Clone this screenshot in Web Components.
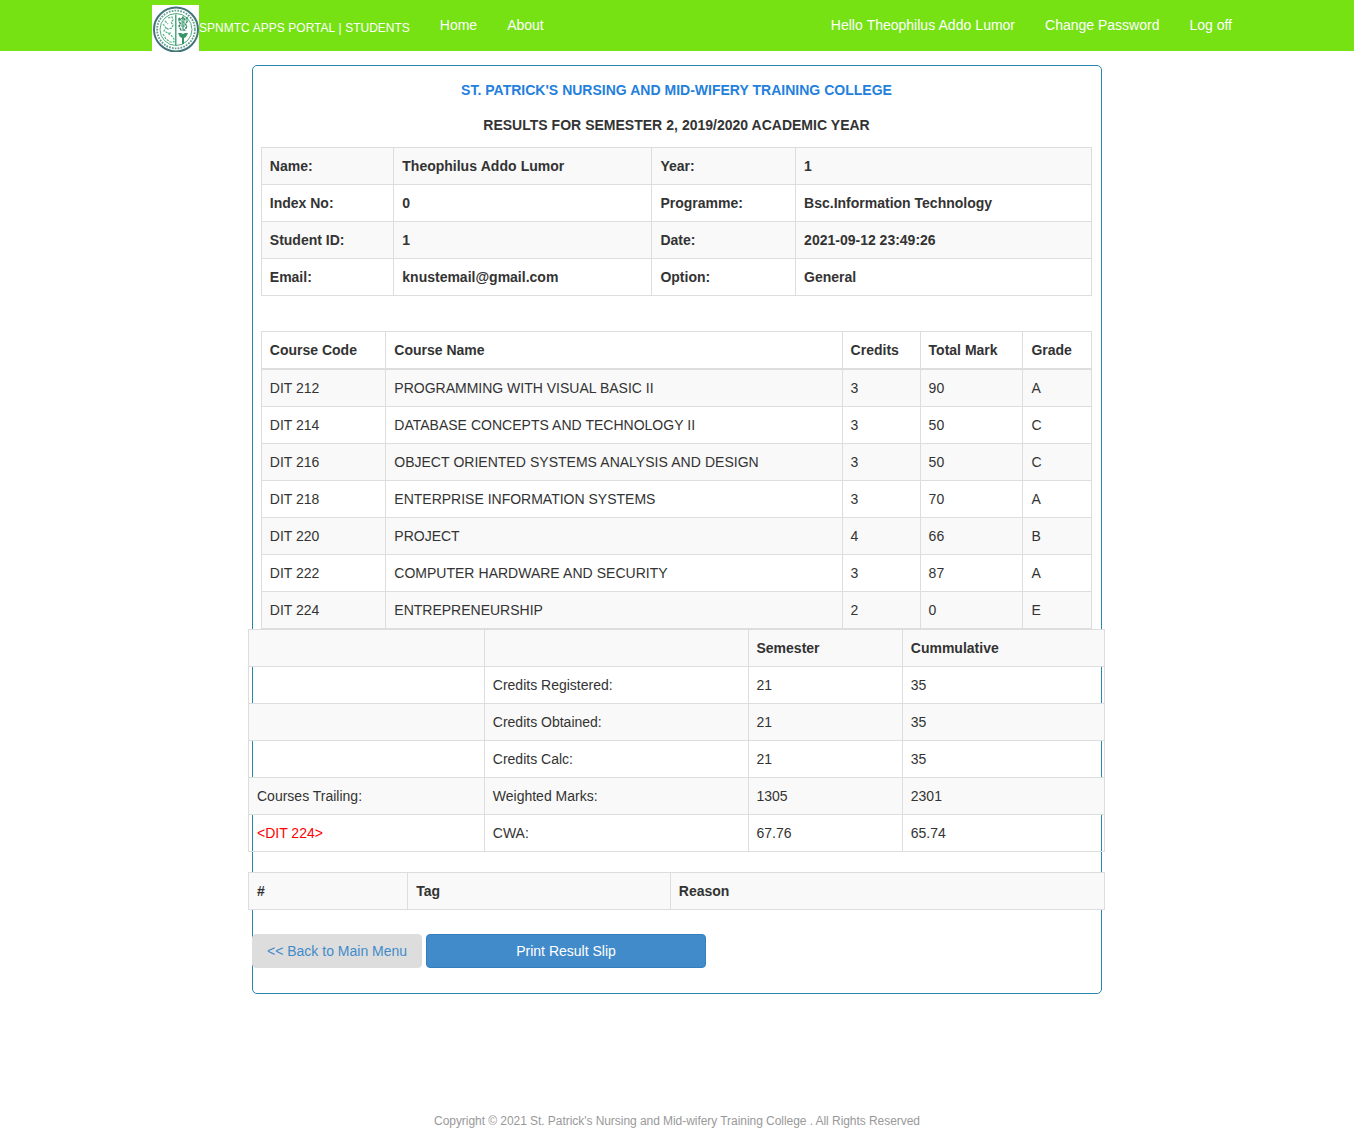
<!DOCTYPE html>
<html lang="en">
<head>
<meta charset="utf-8">
<title>SPNMTC Apps Portal</title>
<style>
body{margin:0;background:#fff;font:14px/20px "Liberation Sans",Arial,sans-serif;color:#333}
</style>
</head>
<body>
<portal-page></portal-page>
<script>
const define = (name, html, setup) => customElements.define(name, class extends HTMLElement {
  constructor() {
    super();
    const root = this.attachShadow({mode: 'open'});
    const t = document.createElement('template');
    t.innerHTML = html;
    root.append(t.content.cloneNode(true));
  }
  connectedCallback() { if (setup) setup(this, this.shadowRoot); }
});

// Evens out the tight kerning between a space and a capital A.
const spacing = s => {
  const gaps = (s.match(/ /g) || []).length;
  return gaps ? ((s.match(/ A/g) || []).length * 0.055 / gaps).toFixed(4) + 'em' : '0';
};

define('college-crest', `
<style>:host{display:block;width:47px;height:47px;flex:none}svg{display:block}</style>
<svg width="47" height="47" viewBox="0 0 47 47" fill="none">
  <rect width="47" height="47" fill="#fff"/>
  <circle cx="24" cy="24.5" r="22" stroke="#43747a" stroke-width="2"/>
  <circle cx="24" cy="24.5" r="18.9" stroke="#5f9c8c" stroke-width="1.8" stroke-dasharray="1.7 1.2"/>
  <circle cx="24" cy="24.5" r="16" stroke="#4fae80" stroke-width="1"/>
  <path d="M23.8 9.5V40" stroke="#2f9a66" stroke-width="1.3"/>
  <path d="M16 13l4-1 1 3-2 2 2 3-1 3-4 1-3-2M11 19l3 4-2 3 4 2 4 0M11 29l3 5 4 3 4 0 0-3-3-4-4-2M13 16l3 3" stroke="#55b485" stroke-width="1.2" stroke-dasharray="2.4 1"/>
  <path d="M27 13l2 2 2-3 2 3 2-2v4l-2 2 2 2-2 4h-4l-2-4 2-2-2-2z" stroke="#2f8d62" stroke-width="1.4" stroke-dasharray="3 .8"/>
  <path d="M31 12v12M29 17h4M29 21h4" stroke="#3e9a71" stroke-width="1.2"/>
  <path d="M26 28h3l2 1 2-1h3l-2 4-2 1v6h-2v-6l-2-1z" fill="#369466"/>
</svg>`);

define('nav-link', `
<style>:host{display:block;padding:15px;color:#fff;white-space:nowrap}</style><slot></slot>`,
(host) => { host.style.wordSpacing = spacing(host.textContent); });

define('nav-bar', `
<style>
:host{display:block;height:51px;background:#76e214}
.in{display:flex;justify-content:space-between;width:1110px;margin-left:137px;height:51px}
.l,.r{display:flex}
.brand{display:flex;align-items:flex-start;padding:5px 15px;color:#fff;font-size:12px}
.brand span{padding-top:13px;white-space:nowrap;word-spacing:.3px}
</style>
<div class="in"><div class="l"><div class="brand"><college-crest></college-crest><span>SPNMTC APPS PORTAL | STUDENTS</span></div>
<nav-link>Home</nav-link><nav-link>About</nav-link></div>
<div class="r"><nav-link>Hello Theophilus Addo Lumor</nav-link><nav-link>Change Password</nav-link><nav-link>Log off</nav-link></div></div>`);

const TABLES = {
  student: {cols: [132,258,144,297], nudge: [-.2,.3,.4,.1], bold: 'all', rows: [
    ['Name:','Theophilus Addo Lumor','Year:','1'],
    ['Index No:','0','Programme:','Bsc.Information Technology'],
    ['Student ID:','1','Date:','2021-09-12 23:49:26'],
    ['Email:','knustemail@gmail.com','Option:','General']]},
  courses: {cols: [124,457,78,102,70], nudge: [-.2,.3,-.4,-.4,.4], head: ['Course Code','Course Name','Credits','Total Mark','Grade'], rows: [
    ['DIT 212','PROGRAMMING WITH VISUAL BASIC II','3','90','A'],
    ['DIT 214','DATABASE CONCEPTS AND TECHNOLOGY II','3','50','C'],
    ['DIT 216','OBJECT ORIENTED SYSTEMS ANALYSIS AND DESIGN','3','50','C'],
    ['DIT 218','ENTERPRISE INFORMATION SYSTEMS','3','70','A'],
    ['DIT 220','PROJECT','4','66','B'],
    ['DIT 222','COMPUTER HARDWARE AND SECURITY','3','87','A'],
    ['DIT 224','ENTREPRENEURSHIP','2','0','E']]},
  summary: {cols: [236,264,154,203], nudge: [0,-.2,-.5,-.2], bold: 'first', rows: [
    ['','','Semester','Cummulative'],
    ['','Credits Registered:','21','35'],
    ['','Credits Obtained:','21','35'],
    ['','Credits Calc:','21','35'],
    ['Courses Trailing:','Weighted Marks:','1305','2301'],
    ['<DIT 224>','CWA:','67.76','65.74']]},
  tags: {cols: [159,263,435], nudge: [0,.2,-.2], bold: 'all', rows: [['#','Tag','Reason']]}
};

define('data-grid', `
<style>
:host{display:block;flex:none}
.t{width:max-content;border-bottom:1px solid #ddd;border-right:1px solid #ddd}
.row{display:grid;border-top:1px solid #ddd}
.cell{box-sizing:border-box;height:36px;padding:8px;border-left:1px solid #ddd;white-space:nowrap}
.odd{background:#f9f9f9}
.b{font-weight:700}
.head + .row{border-top-width:2px}
.red{color:#f00}
</style><div class="t" role="table"></div>`, (host, root) => {
  const d = TABLES[host.getAttribute('kind')], t = root.querySelector('.t');
  const tracks = d.cols.map((w, i) => (i === d.cols.length - 1 ? w - 1 : w) + 'px').join(' ');
  const add = (cells, cls) => {
    const r = document.createElement('div');
    r.className = 'row ' + cls; r.style.gridTemplateColumns = tracks; r.setAttribute('role', 'row');
    cells.forEach((c, i) => {
      const e = document.createElement('div');
      e.className = 'cell' + (c[0] === '<' ? ' red' : ''); e.textContent = c; e.setAttribute('role', 'cell');
      e.style.paddingLeft = 8 + d.nudge[i] + 'px';
      e.style.wordSpacing = spacing(c);
      r.append(e);
    });
    t.append(r);
  };
  if (d.head) add(d.head, 'head b');
  d.rows.forEach((r, i) => add(r, (i % 2 ? '' : 'odd') + (d.bold === 'all' || (d.bold === 'first' && !i) ? ' b' : '')));
});

define('action-button', `
<style>
:host{display:block;box-sizing:border-box;height:34px;padding:6px 14px;border:1px solid #ddd;border-radius:4px;background:#ddd;color:#428bca;text-align:center;white-space:nowrap;width:170px}
:host([primary]){width:280px;background:#428bca;border-color:#357ebd;color:#fff}
</style><slot></slot>`);

define('result-card', `
<style>
:host{display:block;box-sizing:border-box;width:850px;height:929px;margin:14px 0 0 252px;border:1px solid #2a86ad;border-radius:5px;padding:14px 8px 0}
h4{margin:0 0 15px;font-size:14px;line-height:20px;text-align:center;width:831px;word-spacing:.13px}
h4.c{color:#2480dc}
h4.s{margin-bottom:12px}
.courses{margin-top:35px}
.wide{margin-left:-13px}
.tags{margin-top:20px}
.btns{display:flex;gap:4px;margin:24px 0 0 -9px}
</style>
<h4 class="c">ST. PATRICK'S NURSING AND MID-WIFERY TRAINING COLLEGE</h4>
<h4 class="s">RESULTS FOR SEMESTER 2, 2019/2020 ACADEMIC YEAR</h4>
<data-grid kind="student"></data-grid>
<data-grid kind="courses" class="courses"></data-grid>
<data-grid kind="summary" class="wide"></data-grid>
<data-grid kind="tags" class="wide tags"></data-grid>
<div class="btns"><action-button>&lt;&lt; Back to Main Menu</action-button><action-button primary>Print Result Slip</action-button></div>`);

define('page-footer', `
<style>:host{display:block;margin-top:117px;height:28px;text-align:center;font-size:12px;line-height:20px;letter-spacing:-.052px;color:#999;white-space:nowrap}</style>
Copyright © 2021 St. Patrick's Nursing and Mid-wifery Training College . All Rights Reserved`);

define('portal-page', `
<style>:host{display:block;height:1139px;overflow:hidden}</style>
<nav-bar></nav-bar><result-card></result-card><page-footer></page-footer>`);
</script>
</body>
</html>
